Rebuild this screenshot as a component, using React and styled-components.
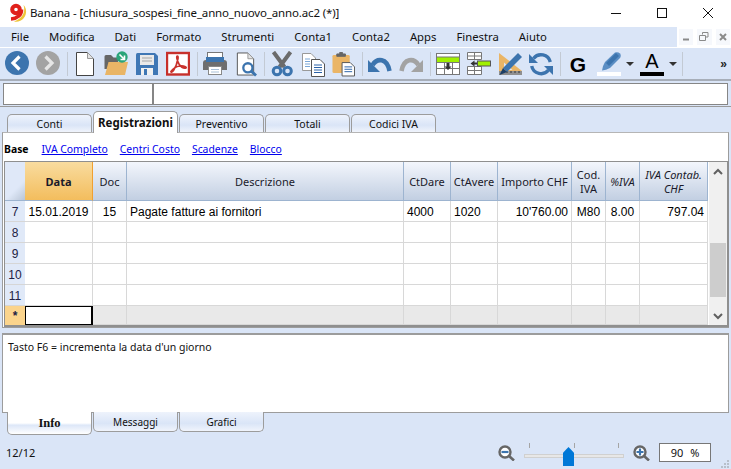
import React from "react";
import styled, { createGlobalStyle } from "styled-components";

const BLUE = "#3c74ae";
const UI = `"Noto Sans", "Open Sans", sans-serif`;
const ARIAL = `"Liberation Sans", Arial, sans-serif`;

const GlobalStyle = createGlobalStyle`
  html, body { margin: 0; padding: 0; background: #dae5f7; }
  * { box-sizing: border-box; }
`;

const Icon = ({ children, w = 24, h = 26 }) => (
  <svg width={w} height={h} viewBox={`0 0 ${w} ${h}`}>
    {children}
  </svg>
);

const Back = () => (
  <Icon>
    <circle cx="12" cy="12" r="12" fill={BLUE} />
    <path d="M14.5 5.5 8 12l6.500 6.500" fill="none" stroke="#fff" strokeWidth="3.2" />
  </Icon>
);
const Forward = () => (
  <Icon>
    <circle cx="12" cy="12" r="12" fill="#a3a3a3" />
    <path d="M9.500 5.500 16 12l-6.500 6.500" fill="none" stroke="#e6e6e6" strokeWidth="3.2" />
  </Icon>
);
const NewDoc = () => (
  <Icon>
    <path d="M3.500 1.500H14.500L20.500 7.500V24.500H3.500Z" fill="#fff" stroke="#444" />
    <path d="M14.500 1.500V7.500H20.500Z" fill="#e4e4e4" stroke="#999" />
  </Icon>
);
const OpenFile = () => (
  <Icon>
    <path d="M0.500 5.500Q0.500 4 2 4H7L9.500 6.500H14V18H0.500Z" fill="#666" />
    <path d="M1 24L4.500 11H24L21 24Z" fill="#e9b566" />
    <circle cx="18" cy="6" r="5.700" fill="#2aa57a" />
    <path d="M15.500 3.500L20 8M20.500 4.500V8.500H16.500" fill="none" stroke="#fff" strokeWidth="1.600" />
  </Icon>
);
const Save = () => (
  <Icon>
    <path d="M1 3.500Q1 2 2.500 2H20L23 5V24H1Z" fill="#3f77b5" />
    <rect x="5" y="4" width="14" height="10" fill="#e9e9e9" />
    <path d="M7 7H17M7 10H17" stroke="#a5a5a5" />
    <rect x="6" y="17" width="12" height="7" fill="#f1f1f1" />
    <rect x="9" y="18" width="3" height="6" fill="#3f77b5" />
  </Icon>
);
const Pdf = () => (
  <Icon>
    <rect x="1" y="2" width="22" height="21.500" fill="#fff" stroke="#c7302b" strokeWidth="2.400" />
    <path
      d="M11.500 5c-1.500 0-.5 4.500 1.500 8 2 3 5 4.500 7 4 1-1-2-2.500-6-2-4 .5-7.500 3-9 5.500-.5 1 1 1 2.500-1 2-3 4-9 4.500-12 .3-2-.3-2.500-.5-2.500z"
      fill="none"
      stroke="#c9322c"
      strokeWidth="1.700"
    />
  </Icon>
);
const Printer = () => (
  <Icon>
    <rect x="4.500" y="1.500" width="15" height="6" fill="#fff" stroke="#777" />
    <path d="M0 12Q0 9 3 9H21Q24 9 24 12V19H0Z" fill="#6e6e6e" />
    <rect x="3" y="6" width="18" height="5" fill={BLUE} />
    <rect x="5.500" y="15.500" width="13" height="8" fill="#fff" stroke="#888" />
    <path d="M8 18.500H16M8 21H16" stroke="#a9c0d8" />
  </Icon>
);
const Preview = () => (
  <Icon>
    <path d="M3.500 1.500H14.500L20.500 7.500V24.500H3.500Z" fill="#fff" stroke="#555" />
    <path d="M14.500 1.500V7.500H20.500Z" fill="#e4e4e4" stroke="#999" />
    <circle cx="14.500" cy="17" r="4.800" fill="#fff" stroke={BLUE} strokeWidth="2.400" />
    <path d="M18 20.500L23 25" stroke={BLUE} strokeWidth="3" />
  </Icon>
);
const Scissors = () => (
  <Icon>
    <path d="M3.500 1L14.500 16M20.500 1L9.500 16" stroke="#6b6b6b" strokeWidth="4" />
    <circle cx="7" cy="20" r="3.800" fill="none" stroke={BLUE} strokeWidth="3" />
    <circle cx="17.500" cy="20" r="3.800" fill="none" stroke={BLUE} strokeWidth="3" />
  </Icon>
);
const Copy = () => (
  <Icon>
    <path d="M1.500 2.500H10L14.500 7V19.500H1.500Z" fill="#fff" stroke="#999" />
    <path d="M4 8H9M4 10.500H9M4 13H9M4 15.500H9" stroke="#7aa7d8" />
    <path d="M10.500 8.500H19L23.500 13V25.500H10.500Z" fill="#fff" stroke="#555" />
    <path d="M13 14H21M13 16.500H21M13 19H21M13 21.500H21" stroke="#2a62a8" />
  </Icon>
);
const Paste = () => (
  <Icon>
    <rect x="0.500" y="3.500" width="18" height="19" rx="1.500" fill="#eab566" />
    <path d="M5 5V2.500H8V1H11V2.500H14V5Z" fill="#666" stroke="#666" />
    <path d="M10.500 11.500H19L23.500 16V25.500H10.500Z" fill="#fff" stroke="#555" />
    <path d="M13 16H21M13 18.500H21M13 21H21" stroke="#2a62a8" />
  </Icon>
);
const Undo = () => (
  <Icon>
    <path d="M0 9V21H12Z" fill={BLUE} />
    <path d="M4.500 14C9 7 19 6.500 21.500 20" fill="none" stroke={BLUE} strokeWidth="4.500" />
  </Icon>
);
const Redo = () => (
  <Icon>
    <path d="M24 9V21H12Z" fill="#a3a3a3" />
    <path d="M19.500 14C15 7 5 6.500 2.500 20" fill="none" stroke="#a3a3a3" strokeWidth="4.500" />
  </Icon>
);
const InsertRow = () => (
  <Icon>
    <rect x="0.500" y="2.500" width="23" height="21" fill="#fff" stroke="#777" />
    <rect x="1" y="6" width="22" height="5" fill="#a0f000" />
    <path d="M1 6H23M1 11.500H23M1 17.500H23M8.500 11.500V23M16.500 11.500V23" stroke="#777" />
    <path d="M10.500 12V15.500H8.500L12 19L15.500 15.500H13.500V12Z" fill="#333" />
  </Icon>
);
const DeleteRow = () => (
  <Icon>
    <path d="M.500 1.500H14.500V8.500H.500ZM.500 5H14.500M7.500 1.500V8.500M.500 15.500H14.500V23.500H.500ZM.500 19.500H14.500M7.500 15.500V23.500" fill="#fff" stroke="#777" />
    <rect x="10.500" y="10" width="13" height="5" fill="#a0f000" stroke="#555" />
    <path d="M10 11.500H7.500V9.500L3.500 12.500L7.500 15.500V13.500H10Z" fill="#333" />
  </Icon>
);
const RulerPen = () => (
  <Icon>
    <path d="M1 2L24 20V24H1Z" fill="#eab566" />
    <path d="M6 11.500L14.500 19H6Z" fill="#dae5f7" />
    <rect x="1" y="20" width="23" height="4" fill="#8f8f8f" />
    <path d="M5 20V22M9 20V22M13 20V22M17 20V22M21 20V22" stroke="#333" />
    <path d="M20 2L24 6L9 21L5 17Z" fill={BLUE} />
    <path d="M5 17L9 21L1.500 24Z" fill="#1d3f66" />
  </Icon>
);
const Refresh = () => (
  <Icon>
    <path d="M4.500 7.500A9.500 9.500 0 0 1 21.300 11" fill="none" stroke={BLUE} strokeWidth="3.400" />
    <path d="M19.500 19A9.500 9.500 0 0 1 2.700 15" fill="none" stroke={BLUE} strokeWidth="3.400" />
    <path d="M0 3V12H9Z" fill={BLUE} />
    <path d="M24 24V15H15Z" fill={BLUE} />
  </Icon>
);
const Highlighter = () => (
  <Icon>
    <path d="M18 1.500Q21 .5 23 2.500Q24.500 4.500 23 7L13 17Q9 19 5 19.500Q5.500 15 8 11Z" fill="#5b8ec4" />
    <path d="M19 2L9 12L12 15L22 5" fill="#3c74ae" />
  </Icon>
);
const ZoomOutIcon = () => (
  <svg width="17" height="16" viewBox="0 0 17 16">
    <circle cx="7" cy="7" r="5.500" fill="#fff" stroke="#666" strokeWidth="2.400" />
    <path d="M3.500 7H10.500" stroke={BLUE} strokeWidth="2.200" />
    <path d="M11 11L16 15.500" stroke="#666" strokeWidth="2.600" />
  </svg>
);
const ZoomInIcon = () => (
  <svg width="17" height="16" viewBox="0 0 17 16">
    <circle cx="7" cy="7" r="5.500" fill="#fff" stroke="#666" strokeWidth="2.400" />
    <path d="M3.500 7H10.500M7 3.500V10.500" stroke={BLUE} strokeWidth="2.200" />
    <path d="M11 11L16 15.500" stroke="#666" strokeWidth="2.600" />
  </svg>
);
const Logo = () => (
  <svg width="18" height="20" viewBox="0 0 18 20">
    <path d="M14.500 2C17 9 13 16 5 18.500C12 20 18 14 17 7C16.700 5 15.800 3.300 14.500 2Z" fill="#efc53a" />
    <circle cx="7" cy="6.500" r="3.800" fill="#fff" stroke="#e0201b" strokeWidth="4" />
    <path d="M12.500 6.500C12.700 12 8 15.700 2 16" fill="none" stroke="#e0201b" strokeWidth="3.600" />
  </svg>
);

const Root = styled.div`
  width: 731px;
  height: 469px;
  display: flex;
  flex-direction: column;
  overflow: hidden;
  background: #dae5f7;
  color: #111;
  font-family: ${UI};
  font-size: 11px;
`;

const TitleBar = styled.div`
  height: 27px;
  background: #fff;
  display: flex;
  align-items: center;
  padding: 0 0 2px 9px;
`;

const TitleText = styled.div`
  margin-left: 3px;
  font-size: 11.500px;
  letter-spacing: -0.15px;
  flex: 1;
  white-space: nowrap;
`;

const WindowButton = styled.div`
  width: 46px;
  height: 25px;
  display: flex;
  align-items: center;
  justify-content: center;
`;

const MenuRow = styled.div`
  height: 20px;
  display: flex;
  background: #fff;
`;

const MenuBar = styled.div`
  width: 677px;
  background: #dae5f7;
  display: flex;
  align-items: center;
  padding: 0 0 2px 1px;
  font-size: 11.300px;
`;

const MenuItem = styled.div`
  padding: 0 10px;
  white-space: nowrap;
`;

const MdiButtons = styled.div`
  flex: 1;
  display: flex;
  gap: 2px;
  padding: 1px 0 1px 1px;
`;

const MdiButton = styled.div`
  flex: 1;
  background: #f6f8fc;
  border: 1px solid #fff;
  color: #8a8a8a;
  display: flex;
  align-items: center;
  justify-content: center;
`;

const Toolbar = styled.div`
  height: 34px;
  border-top: 1px solid #fff;
  border-bottom: 2px solid #a7aeb9;
  padding: 3px 0 0 5px;
  display: flex;
  align-items: flex-start;
  gap: 7px;
`;

const Slot = styled.div`
  width: ${p => p.$w || 24}px;
  height: 26px;
  margin-left: ${p => p.$ml || 0}px;
  display: flex;
  flex: none;
`;

const Separator = styled.div`
  width: 1px;
  height: 24px;
  margin: 1px -2px 0 0;
  background: #c3cad4;
  flex: none;
`;

const GLetter = styled.div`
  width: 24px;
  font: bold 21px/27px ${ARIAL};
  color: #000;
  text-align: center;
`;

const ColorTool = styled.div`
  width: 24px;
  height: 25px;
  display: flex;
  flex-direction: column;
  justify-content: space-between;
  align-items: center;
`;

const ColorA = styled.div`
  font: 20px/21px ${ARIAL};
  color: #000;
  height: 21px;
`;

const ColorBar = styled.div`
  width: 24px;
  height: 4px;
  flex: none;
  background: ${p => p.$color};
`;

const HighlightArt = styled.div`
  height: 21px;
  overflow: hidden;
`;

const Caret = styled.div`
  width: 0;
  height: 0;
  margin: 11px -2px 0 -2px;
  border-left: 4px solid transparent;
  border-right: 4px solid transparent;
  border-top: 4px solid #333;
  flex: none;
`;

const More = styled.div`
  margin: 6px 0 0 auto;
  padding-right: 4px;
  font: bold 12px/14px ${ARIAL};
  color: #222;
`;

const InputRow = styled.div`
  height: 26px;
  padding: 2px 3px 1px 3px;
  border-bottom: 1px solid #9a9a9a;
`;

const InputFrame = styled.div`
  height: 22px;
  display: flex;
  border: 1px solid #868686;
  background: #fff;
`;

const InputCell = styled.div`
  width: ${p => (p.$grow ? "auto" : "150px")};
  flex: ${p => (p.$grow ? 1 : "none")};
  border-right: ${p => (p.$grow ? "none" : "2px solid #868686")};
`;

const TabStrip = styled.div`
  display: flex;
  align-items: ${p => (p.$bottom ? "flex-start" : "flex-end")};
  gap: 1px;
  padding-left: 7px;
  height: ${p => (p.$bottom ? 23 : 21)}px;
  margin-top: ${p => (p.$bottom ? -1 : 4)}px;
  position: relative;
  z-index: 1;
`;

const Tab = styled.div`
  width: ${p => p.$w || 85}px;
  height: ${p => (p.$active ? (p.$bottom ? 23 : 22) : p.$bottom ? 20 : 18)}px;
  margin-bottom: ${p => (p.$active && !p.$bottom ? -1 : 0)}px;
  display: flex;
  align-items: center;
  justify-content: center;
  font-size: ${p => (p.$active ? (p.$bottom ? 12.5 : 11.5) : p.$bottom ? 10 : 10.5)}px;
  font-weight: ${p => (p.$active ? 700 : 400)};
  font-family: ${p => (p.$bottom && p.$active ? `"Liberation Serif", serif` : UI)};
  border: 1px solid #9c9c9c;
  ${p => (p.$bottom ? "border-top: none; border-radius: 0 0 5px 5px;" : "border-bottom: none; border-radius: 5px 5px 0 0;")}
  background: ${p =>
    p.$active
      ? p.$bottom
        ? "linear-gradient(#fff 0, #fff 50%, #dde7f8 60%, #fff 100%)"
        : "#fff"
      : "linear-gradient(#eef3fc, #dae5f7 60%, #f0f4fc)"};
`;

const Pane = styled.div`
  margin: 0 2px;
  height: 196px;
  background: #fff;
  border: 1px solid #9c9c9c;
  border-top-color: #b5b5b5;
  padding: 0 0 0 1px;
  display: flex;
  flex-direction: column;
`;

const LinkRow = styled.div`
  height: 28px;
  display: flex;
  align-items: center;
  gap: 12px;
  padding-top: 4px;
  font-size: 10.400px;
`;

const ViewLink = styled.a`
  color: #0000ee;
  text-decoration: underline;
`;

const ActiveView = styled.b`
  color: #000;
  margin-right: 1px;
`;

const GridFrame = styled.div`
  height: 166px;
  display: flex;
  border: 1px solid #8f8f8f;
  border-right-width: 2px;
  border-bottom-width: 2px;
  background: #fff;
  margin-right: -1px;
`;

const GridBody = styled.div`
  width: 703px;
  flex: none;
`;

const COLUMNS = "20px 68px 34px 277px 47px 47px 74px 34px 34px 68px";

const Row = styled.div`
  display: grid;
  grid-template-columns: ${COLUMNS};
  height: ${p => p.$h}px;
`;

const HeadCell = styled.div`
  display: flex;
  align-items: center;
  justify-content: center;
  text-align: center;
  line-height: 14px;
  padding-top: 1px;
  font-size: 11px;
  color: #1a1a2a;
  font-style: ${p => (p.$italic ? "italic" : "normal")};
  font-weight: ${p => (p.$active ? 700 : 400)};
  border-right: 1px solid ${p => (p.$active ? "#f0a030" : "#9db4d0")};
  border-bottom: 1px solid #9db4d0;
  background: ${p =>
    p.$active
      ? "linear-gradient(#f9dc9f, #f3bd5d)"
      : "linear-gradient(#f3f6fc, #c2cfe2)"};
`;

const Corner = styled.div`
  border-bottom: 1px solid #9db4d0;
  background: linear-gradient(135deg, #dfe8f8 65%, #b9c5d6);
`;

const RowHead = styled.div`
  display: flex;
  align-items: center;
  justify-content: center;
  padding-top: 1px;
  font: 12px ${ARIAL};
  color: #222244;
  background: ${p => (p.$active ? "#fbd48c" : "#e0e9f8")};
  border-bottom: 1px solid ${p => (p.$active ? "#fbd48c" : "#d6d6d6")};
  font-weight: ${p => (p.$active ? 700 : 400)};
`;

const Cell = styled.div`
  display: flex;
  align-items: center;
  justify-content: ${p => (p.$right ? "flex-end" : p.$center ? "center" : "flex-start")};
  padding: 1px 3px 0;
  font: 12px ${ARIAL};
  color: #000;
  white-space: nowrap;
  border-right: 1px solid #d8d8d8;
  border-bottom: 1px solid #d8d8d8;
  background: ${p => (p.$muted ? "#e9e9e9" : "#fff")};
`;

const SelectedCell = styled.div`
  background: #fff;
  border: 1px solid #000;
  border-width: 1px 2px 1px 1px;
`;

const Scrollbar = styled.div`
  flex: 1;
  background: #f0f0f0;
  margin-left: 1px;
  padding: 0 1px 0 1px;
  display: flex;
  flex-direction: column;
  align-items: center;
  color: #606060;
`;

const ScrollArrow = styled.div`
  height: 18px;
  flex: none;
  display: flex;
  align-items: center;
  justify-content: center;
`;

const ScrollTrack = styled.div`
  flex: 1;
  width: 100%;
  padding-top: 63px;
`;

const ScrollThumb = styled.div`
  height: 54px;
  background: #cdcdcd;
`;

const InfoPane = styled.div`
  margin: 5px 2px 0 2px;
  height: 80px;
  background: #fff;
  border: 1px solid #9c9c9c;
  border-top-width: 2px;
  padding: 5px 5px;
  font-size: 10.500px;
`;

const StatusBar = styled.div`
  flex: 1;
  display: flex;
  align-items: flex-start;
  padding: 8px 20px 0 6px;
  position: relative;
`;

const Counter = styled.div`
  flex: 1;
  font-size: 11px;
  padding-top: 2px;
`;

const ZoomGroup = styled.div`
  display: flex;
  align-items: flex-start;
`;

const Slider = styled.div`
  width: 100px;
  height: 24px;
  margin: 0 9px;
  position: relative;
`;

const Track = styled.div`
  position: absolute;
  left: 0;
  right: 0;
  top: 11px;
  height: 4px;
  background: #e7e7e7;
  border: 1px solid #d0d0d0;
`;

const Ticks = styled.div`
  display: flex;
  justify-content: space-between;
  padding: 0 5px;
`;

const Tick = styled.div`
  width: 1px;
  height: 5px;
  background: #a5a5a5;
`;

const Thumb = styled.div`
  position: absolute;
  left: 39px;
  top: 4px;
  width: 11px;
  height: 19px;
  background: #0078d7;
  clip-path: polygon(50% 0, 100% 30%, 100% 100%, 0 100%, 0 30%);
`;

const ZoomField = styled.div`
  width: 52px;
  height: 19px;
  margin-left: 9px;
  border: 1px solid #777;
  background: #fff;
  display: flex;
  align-items: center;
  justify-content: center;
  gap: 7px;
  font-size: 11px;
`;

const ZoomIconBox = styled.div`
  height: 16px;
  margin-top: 2px;
  display: flex;
`;

const Grip = styled.svg`
  position: absolute;
  right: 2px;
  bottom: 1px;
`;

const MENU = ["File", "Modifica", "Dati", "Formato", "Strumenti", "Conta1", "Conta2", "Apps", "Finestra", "Aiuto"];
const VIEWS = ["IVA Completo", "Centri Costo", "Scadenze", "Blocco"];

const App = () => (
  <Root>
    <GlobalStyle />
    <TitleBar>
      <Logo />
      <TitleText>Banana - [chiusura_sospesi_fine_anno_nuovo_anno.ac2 (*)]</TitleText>
      <WindowButton>
        <svg width="10" height="10"><path d="M0 5.500H10" stroke="#111" /></svg>
      </WindowButton>
      <WindowButton>
        <svg width="10" height="10"><rect x=".5" y=".5" width="9" height="9" fill="none" stroke="#111" /></svg>
      </WindowButton>
      <WindowButton>
        <svg width="10" height="10"><path d="M0 0L10 10M10 0L0 10" stroke="#111" /></svg>
      </WindowButton>
    </TitleBar>
    <MenuRow>
      <MenuBar>
        {MENU.map(m => <MenuItem key={m}>{m}</MenuItem>)}
      </MenuBar>
      <MdiButtons>
        <MdiButton><svg width="8" height="8"><path d="M1 6.500H7" stroke="#8a8a8a" strokeWidth="2" /></svg></MdiButton>
        <MdiButton><svg width="10" height="10"><path d="M3.500 2.500V.5H9V5H6.500M.5 3.500H6.500V8.500H.5Z" fill="none" stroke="#8a8a8a" /></svg></MdiButton>
        <MdiButton><svg width="8" height="8"><path d="M1 1L7 7M7 1L1 7" stroke="#8a8a8a" strokeWidth="2" /></svg></MdiButton>
      </MdiButtons>
    </MenuRow>
    <Toolbar>
      <Slot><Back /></Slot>
      <Slot><Forward /></Slot>
      <Separator />
      <Slot><NewDoc /></Slot>
      <Slot><OpenFile /></Slot>
      <Slot><Save /></Slot>
      <Slot><Pdf /></Slot>
      <Separator />
      <Slot><Printer /></Slot>
      <Slot $w={23}><Preview /></Slot>
      <Separator />
      <Slot><Scissors /></Slot>
      <Slot><Copy /></Slot>
      <Slot $w={23}><Paste /></Slot>
      <Separator />
      <Slot><Undo /></Slot>
      <Slot><Redo /></Slot>
      <Separator />
      <Slot><InsertRow /></Slot>
      <Slot><DeleteRow /></Slot>
      <Slot><RulerPen /></Slot>
      <Slot><Refresh /></Slot>
      <Separator />
      <Slot><GLetter>G</GLetter></Slot>
      <Slot>
        <ColorTool>
          <HighlightArt><Highlighter /></HighlightArt>
          <ColorBar $color="#fff" />
        </ColorTool>
      </Slot>
      <Caret />
      <Slot $ml={1}>
        <ColorTool>
          <ColorA>A</ColorA>
          <ColorBar $color="#000" />
        </ColorTool>
      </Slot>
      <Caret />
      <Separator />
      <More>»</More>
    </Toolbar>
    <InputRow>
      <InputFrame>
        <InputCell />
        <InputCell $grow />
      </InputFrame>
    </InputRow>
    <TabStrip>
      <Tab>Conti</Tab>
      <Tab $active>Registrazioni</Tab>
      <Tab>Preventivo</Tab>
      <Tab>Totali</Tab>
      <Tab>Codici IVA</Tab>
    </TabStrip>
    <Pane>
      <LinkRow>
        <ActiveView>Base</ActiveView>
        {VIEWS.map(v => <ViewLink key={v}>{v}</ViewLink>)}
      </LinkRow>
      <GridFrame>
        <GridBody>
          <Row $h={39}>
            <Corner />
            <HeadCell $active>Data</HeadCell>
            <HeadCell>Doc</HeadCell>
            <HeadCell>Descrizione</HeadCell>
            <HeadCell>CtDare</HeadCell>
            <HeadCell>CtAvere</HeadCell>
            <HeadCell>Importo CHF</HeadCell>
            <HeadCell>Cod.<br />IVA</HeadCell>
            <HeadCell $italic>%IVA</HeadCell>
            <HeadCell $italic>IVA Contab.<br />CHF</HeadCell>
          </Row>
          <Row $h={21}>
            <RowHead>7</RowHead>
            <Cell $center>15.01.2019</Cell>
            <Cell $center>15</Cell>
            <Cell>Pagate fatture ai fornitori</Cell>
            <Cell>4000</Cell>
            <Cell>1020</Cell>
            <Cell $right>10'760.00</Cell>
            <Cell $center>M80</Cell>
            <Cell $center>8.00</Cell>
            <Cell $right>797.04</Cell>
          </Row>
          {[8, 9, 10, 11].map(n => (
            <Row $h={21} key={n}>
              <RowHead>{n}</RowHead>
              {Array.from({ length: 9 }, (_, i) => <Cell key={i} />)}
            </Row>
          ))}
          <Row $h={19}>
            <RowHead $active>*</RowHead>
            <SelectedCell />
            {Array.from({ length: 8 }, (_, i) => <Cell key={i} $muted />)}
          </Row>
        </GridBody>
        <Scrollbar>
          <ScrollArrow>
            <svg width="10" height="7"><path d="M1 6L5 2L9 6" fill="none" stroke="#606060" strokeWidth="2" /></svg>
          </ScrollArrow>
          <ScrollTrack><ScrollThumb /></ScrollTrack>
          <ScrollArrow>
            <svg width="10" height="7"><path d="M1 1L5 5L9 1" fill="none" stroke="#606060" strokeWidth="2" /></svg>
          </ScrollArrow>
        </Scrollbar>
      </GridFrame>
    </Pane>
    <InfoPane>Tasto F6 = incrementa la data d'un giorno</InfoPane>
    <TabStrip $bottom>
      <Tab $bottom $active>Info</Tab>
      <Tab $bottom>Messaggi</Tab>
      <Tab $bottom>Grafici</Tab>
    </TabStrip>
    <StatusBar>
      <Counter>12/12</Counter>
      <ZoomGroup>
        <ZoomIconBox><ZoomOutIcon /></ZoomIconBox>
        <Slider>
          <Ticks><Tick /><Tick /><Tick /></Ticks>
          <Track />
          <Thumb />
        </Slider>
        <ZoomIconBox><ZoomInIcon /></ZoomIconBox>
        <ZoomField><span>90</span><span>%</span></ZoomField>
      </ZoomGroup>
      <Grip width="8" height="8">
        <path d="M6 0h2v2H6zM3 3h2v2H3zM6 3h2v2H6zM0 6h2v2H0zM3 6h2v2H3zM6 6h2v2H6z" fill="#b8bfca" />
      </Grip>
    </StatusBar>
  </Root>
);

export default App;
